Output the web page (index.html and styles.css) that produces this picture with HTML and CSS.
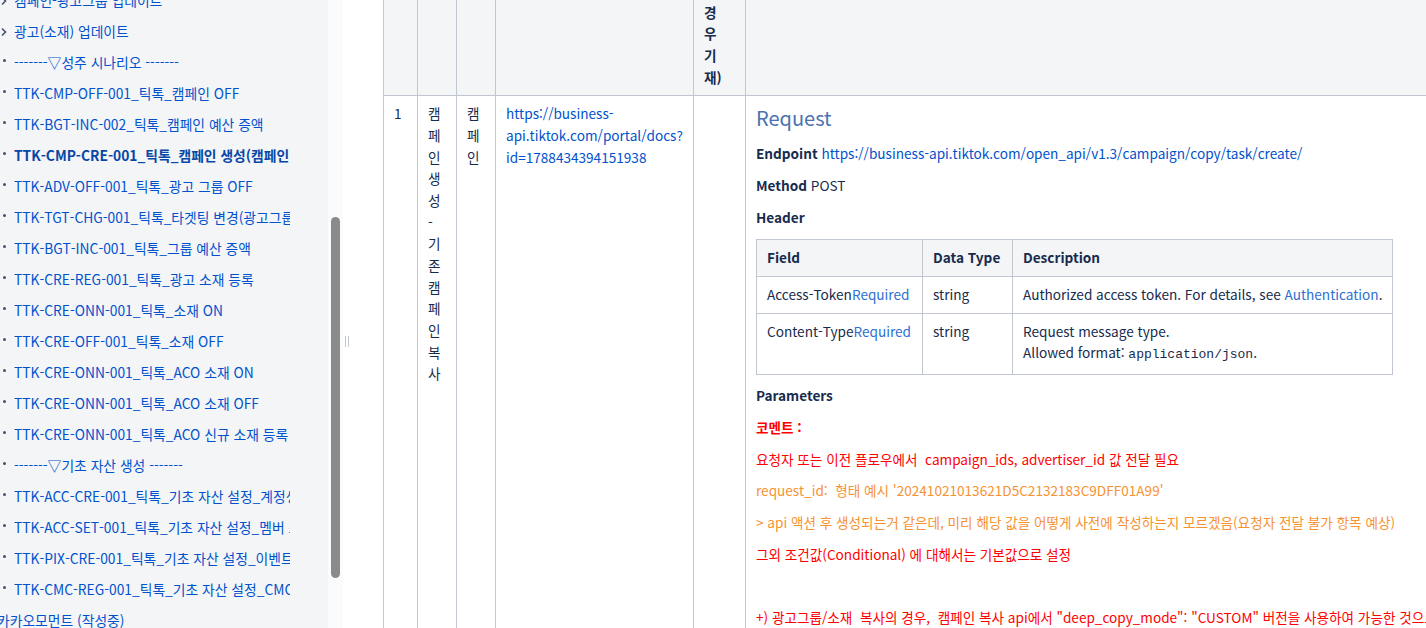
FILE: index.html
```html
<!DOCTYPE html>
<html lang="ko">
<head>
<meta charset="utf-8">
<title>TTK-CMP-CRE-001</title>
<link rel="stylesheet" href="styles.css">
</head>
<body>
<div class="app">
  <aside class="sidebar">
    <nav class="tree">
      <ul class="tree-list">
        <li class="tree-item"><span class="tree-icon"><svg class="chev" width="8" height="10" viewBox="0 0 8 10"><path d="M2 1.5 L5.5 5 L2 8.5" fill="none" stroke="#42526e" stroke-width="1.6"/></svg></span><a class="tree-link">캠페인-광고그룹 업데이트</a></li>
        <li class="tree-item"><span class="tree-icon"><svg class="chev" width="8" height="10" viewBox="0 0 8 10"><path d="M2 1.5 L5.5 5 L2 8.5" fill="none" stroke="#42526e" stroke-width="1.6"/></svg></span><a class="tree-link">광고(소재) 업데이트</a></li>
        <li class="tree-item"><span class="tree-icon"><span class="bullet"></span></span><a class="tree-link">-------▽성주 시나리오 -------</a></li>
        <li class="tree-item"><span class="tree-icon"><span class="bullet"></span></span><a class="tree-link">TTK-CMP-OFF-001_틱톡_캠페인 OFF</a></li>
        <li class="tree-item"><span class="tree-icon"><span class="bullet"></span></span><a class="tree-link">TTK-BGT-INC-002_틱톡_캠페인 예산 증액</a></li>
        <li class="tree-item current"><span class="tree-icon"><span class="bullet"></span></span><a class="tree-link">TTK-CMP-CRE-001_틱톡_캠페인 생성(캠페인 복사)</a></li>
        <li class="tree-item"><span class="tree-icon"><span class="bullet"></span></span><a class="tree-link">TTK-ADV-OFF-001_틱톡_광고 그룹 OFF</a></li>
        <li class="tree-item"><span class="tree-icon"><span class="bullet"></span></span><a class="tree-link">TTK-TGT-CHG-001_틱톡_타겟팅 변경(광고그룹)</a></li>
        <li class="tree-item"><span class="tree-icon"><span class="bullet"></span></span><a class="tree-link">TTK-BGT-INC-001_틱톡_그룹 예산 증액</a></li>
        <li class="tree-item"><span class="tree-icon"><span class="bullet"></span></span><a class="tree-link">TTK-CRE-REG-001_틱톡_광고 소재 등록</a></li>
        <li class="tree-item"><span class="tree-icon"><span class="bullet"></span></span><a class="tree-link">TTK-CRE-ONN-001_틱톡_소재 ON</a></li>
        <li class="tree-item"><span class="tree-icon"><span class="bullet"></span></span><a class="tree-link">TTK-CRE-OFF-001_틱톡_소재 OFF</a></li>
        <li class="tree-item"><span class="tree-icon"><span class="bullet"></span></span><a class="tree-link">TTK-CRE-ONN-001_틱톡_ACO 소재 ON</a></li>
        <li class="tree-item"><span class="tree-icon"><span class="bullet"></span></span><a class="tree-link">TTK-CRE-ONN-001_틱톡_ACO 소재 OFF</a></li>
        <li class="tree-item"><span class="tree-icon"><span class="bullet"></span></span><a class="tree-link">TTK-CRE-ONN-001_틱톡_ACO 신규 소재 등록</a></li>
        <li class="tree-item"><span class="tree-icon"><span class="bullet"></span></span><a class="tree-link">-------▽기초 자산 생성 -------</a></li>
        <li class="tree-item"><span class="tree-icon"><span class="bullet"></span></span><a class="tree-link">TTK-ACC-CRE-001_틱톡_기초 자산 설정_계정생성</a></li>
        <li class="tree-item"><span class="tree-icon"><span class="bullet"></span></span><a class="tree-link">TTK-ACC-SET-001_틱톡_기초 자산 설정_멤버 초대</a></li>
        <li class="tree-item"><span class="tree-icon"><span class="bullet"></span></span><a class="tree-link">TTK-PIX-CRE-001_틱톡_기초 자산 설정_이벤트</a></li>
        <li class="tree-item"><span class="tree-icon"><span class="bullet"></span></span><a class="tree-link">TTK-CMC-REG-001_틱톡_기초 자산 설정_CMC</a></li>
        <li class="tree-item parent"><span class="tree-icon"></span><a class="tree-link">카카오모먼트 (작성중)</a></li>
      </ul>
    </nav>
    <div class="scrolltrack"><div class="thumb"></div></div>
  </aside>
  <div class="resizer"><span class="grip"></span></div>
  <main class="content">
    <div class="scroll-area">
      <table class="main-table">
        <colgroup>
          <col class="c-no"><col class="c-step"><col class="c-target"><col class="c-doc"><col class="c-note"><col class="c-spec">
        </colgroup>
        <thead>
          <tr>
            <th>No</th>
            <th>기능</th>
            <th>대상</th>
            <th>API 문서</th>
            <th><span class="narrow">요청자 전달 항목 (필요한 경우 기재)</span></th>
            <th>API 명세</th>
          </tr>
        </thead>
        <tbody>
          <tr>
            <td>1</td>
            <td>캠페인생성 - 기존캠페인복사</td>
            <td>캠페인</td>
            <td><a class="link">https://business-api.tiktok.com/portal/docs?id=1788434394151938</a></td>
            <td></td>
            <td>
              <h3 class="req-title">Request</h3>
              <p><strong>Endpoint</strong> <a class="link">https://business-api.tiktok.com/open_api/v1.3/campaign/copy/task/create/</a></p>
              <p><strong>Method</strong> POST</p>
              <p><strong>Header</strong></p>
              <table class="inner">
                <colgroup><col class="i-field"><col class="i-type"><col class="i-desc"></colgroup>
                <thead>
                  <tr><th>Field</th><th>Data Type</th><th>Description</th></tr>
                </thead>
                <tbody>
                  <tr><td>Access-Token<a class="req">Required</a></td><td>string</td><td>Authorized access token. For details, see <a class="req">Authentication</a>.</td></tr>
                  <tr><td>Content-Type<a class="req">Required</a></td><td>string</td><td>Request message type.<br>Allowed format: <code>application/json</code>.</td></tr>
                </tbody>
              </table>
              <p><strong>Parameters</strong></p>
              <p class="red"><strong>코멘트 :</strong></p>
              <p class="red">요청자 또는 이전 플로우에서&nbsp; campaign_ids, advertiser_id 값 전달 필요</p>
              <p class="orange">request_id:&nbsp; 형태 예시 '20241021013621D5C2132183C9DFF01A99'</p>
              <p class="orange">&gt; api 액션 후 생성되는거 같은데, 미리 해당 값을 어떻게 사전에 작성하는지 모르겠음(요청자 전달 불가 항목 예상)</p>
              <p class="red">그외 조건값(Conditional) 에 대해서는 기본값으로 설정</p>
              <p>&nbsp;</p>
              <p class="red">+) 광고그룹/소재&nbsp; 복사의 경우,&nbsp; 캠페인 복사 api에서 "deep_copy_mode": "CUSTOM" 버전을 사용하여 가능한 것으로 보임</p>
            </td>
          </tr>
        </tbody>
      </table>
    </div>
  </main>
</div>
</body>
</html>
```

FILE: styles.css
```css
html, body {
  margin: 0;
  padding: 0;
}

body {
  font-family: "Noto Sans CJK KR", "Noto Sans", sans-serif;
  font-size: 13.6px;
  color: #172b4d;
  background: #ffffff;
}

.app {
  display: flex;
  height: 628px;
  overflow: hidden;
}

/* ---------- Sidebar ---------- */
.sidebar {
  display: flex;
  flex: 0 0 343px;
}

.tree {
  width: 328px;
  background: #f4f5f7;
  overflow: hidden;
}

.tree-list {
  list-style: none;
  margin: -15px 0 0;
  padding: 0;
  width: 290px;
  overflow: hidden;
  font-size: 13.8px;
}

.tree-item {
  display: flex;
  align-items: center;
  height: 31px;
  line-height: 31px;
  white-space: nowrap;
}

.tree-icon {
  flex: 0 0 14px;
  height: 31px;
  display: flex;
  align-items: center;
}

.chev {
  display: block;
}

.bullet {
  display: block;
  width: 3px;
  height: 3px;
  border-radius: 50%;
  background: #42526e;
  margin: -5px 0 0 3px;
}

.tree-link {
  color: #0052cc;
  text-decoration: none;
  overflow: hidden;
}

.tree-item.current .tree-link {
  font-weight: 700;
  color: #0747a6;
}

.tree-item.parent .tree-link {
  margin-left: -17px;
}

.scrolltrack {
  width: 15px;
  background: #fafbfc;
  padding: 217px 0 0 3px;
  box-sizing: border-box;
}

.thumb {
  width: 9px;
  height: 361px;
  border-radius: 5px;
  background: #8a8a8a;
}

/* ---------- Resizer ---------- */
.resizer {
  flex: 0 0 20px;
  padding-top: 336px;
  box-sizing: border-box;
}

.grip {
  display: block;
  width: 2px;
  height: 11px;
  margin-left: 2px;
  border-left: 1px solid #c1c7d0;
  border-right: 1px solid #c1c7d0;
}

/* ---------- Content ---------- */
.content {
  flex: 1;
  min-width: 0;
  overflow: hidden;
  padding-left: 20px;
}

.scroll-area {
  margin-top: -223px;
}

.main-table {
  border-collapse: collapse;
  table-layout: fixed;
  width: 1322px;
}

.c-no { width: 34px; }
.c-step { width: 39px; }
.c-target { width: 39px; }
.c-doc { width: 198px; }
.c-note { width: 52px; }
.c-spec { width: 960px; }

.main-table > thead > tr > th,
.main-table > tbody > tr > td {
  border: 1px solid #c1c7d0;
  padding: 7px 10px;
  vertical-align: top;
  text-align: left;
  line-height: 21.67px;
}

.main-table > thead > tr > th {
  background: #f4f5f7;
  font-weight: 700;
}

.narrow {
  display: block;
  width: 22px;
}

.link {
  color: #0052cc;
  text-decoration: none;
}

.req-title {
  margin: 0;
  font-size: 20px;
  font-weight: 400;
  line-height: 30px;
  color: #4b72b0;
}

.main-table p {
  margin: 10px 0 0;
}

.main-table strong {
  font-weight: 700;
}

.red {
  color: #ff0000;
}

.orange {
  color: #f79232;
}

/* ---------- Inner table ---------- */
.inner {
  border-collapse: collapse;
  table-layout: fixed;
  width: 636px;
  margin-top: 11px;
}

.i-field { width: 166px; }
.i-type { width: 90px; }
.i-desc { width: 380px; }

.inner th,
.inner td {
  border: 1px solid #c1c7d0;
  padding: 7px 10px;
  text-align: left;
  vertical-align: top;
  line-height: 21.67px;
  white-space: nowrap;
}

.inner th {
  background: #f4f5f7;
  font-weight: 700;
}

.req {
  color: #2e6fd1;
  text-decoration: none;
}

code {
  font-family: "Liberation Mono", monospace;
  font-size: 13px;
  line-height: 24px;
}
```
